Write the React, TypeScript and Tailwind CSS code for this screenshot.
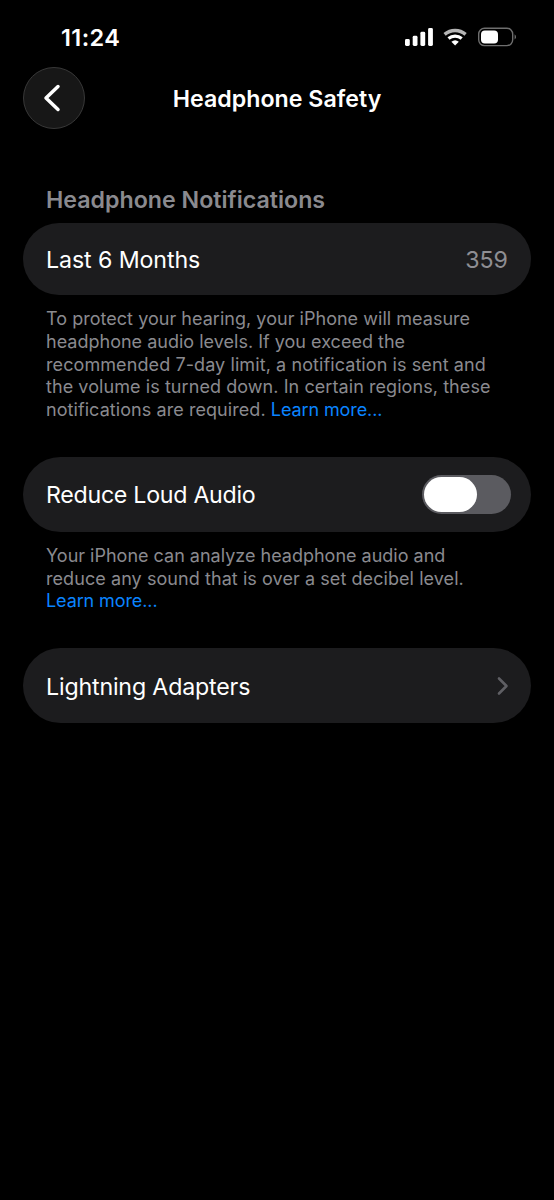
import type { ReactNode } from "react";

function StatusBar() {
  return (
    <header className="flex h-[67px] items-start justify-between pl-[61px] pr-[37px]">
      <time className="mt-[23px] text-[23.5px] leading-[30px] font-semibold tracking-[0.4px]">11:24</time>
      <svg className="mt-[27px]" width="112" height="20" viewBox="0 0 112 20" fill="none">
        <g fill="#fff">
          <rect x="0" y="12" width="4.8" height="7" rx="1.4" />
          <rect x="7.7" y="8.8" width="4.8" height="10.2" rx="1.4" />
          <rect x="15.4" y="4.8" width="4.8" height="14.2" rx="1.4" />
          <rect x="23.1" y="1" width="4.8" height="18" rx="1.4" />
        </g>
        <path d="M39.6 7.4A16 16 0 0 1 60.6 7.4" stroke="#b4b4b4" strokeWidth="3.4" />
        <path d="M43.5 11.5A10.3 10.3 0 0 1 56.7 11.5" stroke="#fff" strokeWidth="3.2" />
        <path d="M46.4 14.8A5.7 5.7 0 0 1 53.8 14.8L50.1 18.6Z" fill="#fff" />
        <rect x="73.7" y="1.2" width="34" height="17.4" rx="5.8" stroke="#6e6e6e" strokeWidth="1.4" />
        <rect x="76" y="3.4" width="17" height="13" rx="3.9" fill="#fff" />
        <path d="M109.7 7.2Q112 9.9 109.7 12.6Z" fill="#8a8a8a" />
      </svg>
    </header>
  );
}

function Card({ children, className }: { children: ReactNode; className: string }) {
  return (
    <div
      className={`flex items-center justify-between rounded-full bg-[#1c1c1e] pl-[23px] text-[23.2px] leading-[30px] ${className}`}
    >
      {children}
    </div>
  );
}

function Line({ children, className }: { children: ReactNode; className: string }) {
  return <span className={`block whitespace-nowrap ${className}`}>{children}</span>;
}

function LearnMore() {
  return <a className="tracking-[-0.1px] text-[#0a84ff]">Learn more...</a>;
}

export default function App() {
  return (
    <main className="h-[1200px] w-[554px] overflow-hidden bg-black font-['Inter',sans-serif] text-white">
      <StatusBar />
      <nav className="grid h-[62px] grid-cols-[62px_1fr_62px] items-center px-[23px]">
        <button
          aria-label="Back"
          className="flex size-[62px] items-center justify-center rounded-full border border-[#383838] bg-[#171717]"
        >
          <svg className="-ml-1" width="20" height="30" viewBox="0 0 20 30" fill="none">
            <path d="M16 3.5L4 15L16 26.5" stroke="#fff" strokeWidth="3.5" strokeLinecap="round" strokeLinejoin="round" />
          </svg>
        </button>
        <h1 className="mt-0.5 text-center text-[23.2px] leading-[30px] font-semibold tracking-[0.02px] whitespace-nowrap">Headphone Safety</h1>
      </nav>

      <section className="px-[23px] pt-[56px]">
        <h2 className="pl-[23px] text-[23.2px] leading-[30px] font-semibold tracking-[0px] text-[#8a8a8f]">Headphone Notifications</h2>
        <Card className="mt-[7.5px] h-[72.5px] pt-[2px] pr-[23px]">
          <span className="tracking-[-0.1px]">Last 6 Months</span>
          <span className="tracking-[0px] text-[#8e8e93]">359</span>
        </Card>
        <p className="mt-[13px] pl-[23px] text-[18px] leading-[22.75px] text-[#8a8a8f]">
          <Line className="tracking-[0.03px]">To protect your hearing, your iPhone will measure</Line>
          <Line className="tracking-[0.01px]">headphone audio levels. If you exceed the</Line>
          <Line className="tracking-[0.09px]">recommended 7-day limit, a notification is sent and</Line>
          <Line className="tracking-[0.07px]">the volume is turned down. In certain regions, these</Line>
          <Line className="tracking-[0.07px]">notifications are required. <LearnMore /></Line>
        </p>
      </section>

      <section className="px-[23px] pt-[35.5px]">
        <Card className="h-[74.5px] pr-[20px]">
          <span className="tracking-[-0.28px]">Reduce Loud Audio</span>
          <button role="switch" aria-checked="false" aria-label="Reduce Loud Audio" className="flex h-[39.5px] w-[89.5px] items-center rounded-full bg-[#5b5b60] pl-[2.5px]">
            <span className="h-[34.5px] w-[53px] rounded-full bg-white" />
          </button>
        </Card>
        <p className="mt-[13px] pl-[23px] text-[18px] leading-[22.75px] text-[#8a8a8f]">
          <Line className="tracking-[0px]">Your iPhone can analyze headphone audio and</Line>
          <Line className="tracking-[0.07px]">reduce any sound that is over a set decibel level.</Line>
          <Line className="tracking-[0.07px]"><LearnMore /></Line>
        </p>
      </section>

      <section className="px-[23px] pt-[35px]">
        <Card className="h-[75px] pr-[22px]">
          <span className="mt-[2px] tracking-[-0.17px]">Lightning Adapters</span>
          <svg width="12" height="20" viewBox="0 0 12 20" fill="none">
            <path d="M2 2.5L9.5 10L2 17.5" stroke="#5f5f64" strokeWidth="2.6" strokeLinecap="round" strokeLinejoin="round" />
          </svg>
        </Card>
      </section>
    </main>
  );
}
